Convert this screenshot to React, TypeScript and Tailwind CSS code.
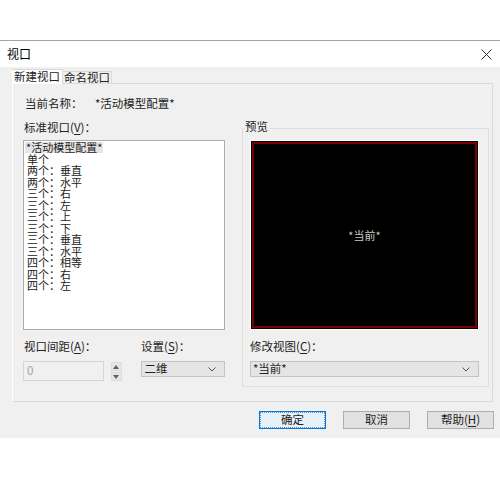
import { ReactNode } from "react";

const items = [
  "*活动模型配置*",
  "单个",
  "两个：垂直",
  "两个：水平",
  "三个：右",
  "三个：左",
  "三个：上",
  "三个：下",
  "三个：垂直",
  "三个：水平",
  "四个：相等",
  "四个：右",
  "四个：左",
];

function Mn({ children }: { children: ReactNode }) {
  return <span className="underline underline-offset-2">{children}</span>;
}

function Chevron() {
  return (
    <svg width="8" height="5" viewBox="0 0 8 5" className="shrink-0">
      <path d="M0.5 0.5 L4 4 L7.5 0.5" fill="none" stroke="#555" strokeWidth="1" />
    </svg>
  );
}

function Combo({ value, className }: { value: string; className: string }) {
  return (
    <div
      className={`h-[16px] flex items-center justify-between pl-[2px] pr-[8px] bg-[#e5e5e5] border border-[#c3c3c3] text-[#222] ${className}`}
    >
      <span>{value}</span>
      <Chevron />
    </div>
  );
}

function Button({ label, primary }: { label: ReactNode; primary?: boolean }) {
  return (
    <div
      className={`w-[67px] h-[18px] flex items-center justify-center border ${
        primary ? "border-[#0078d7] bg-[#e5f1fb]" : "border-[#adadad] bg-[#e1e1e1]"
      }`}
    >
      <div
        className={`w-full h-full flex items-center justify-center ${
          primary ? "border border-dotted border-[#6a8cb0]" : ""
        }`}
      >
        {label}
      </div>
    </div>
  );
}

export default function App() {
  return (
    <div
      className="w-[500px] h-[480px] bg-white flex flex-col text-[11.5px] text-[#222] leading-none"
      style={{ fontFamily: '"Noto Sans CJK SC", "Liberation Sans", sans-serif' }}
    >
      <div className="h-[40px] shrink-0" />

      {/* title bar */}
      <div className="h-[27px] shrink-0 border-t border-[#a6a6a6] flex items-center justify-between pl-[7px] pr-[8px]">
        <span className="text-[12px] text-black">视口</span>
        <svg width="11" height="11" viewBox="0 0 11 11">
          <path d="M0.5 0.5 L10.5 10.5 M10.5 0.5 L0.5 10.5" stroke="#333" strokeWidth="1" />
        </svg>
      </div>

      {/* dialog body */}
      <div className="h-[371px] shrink-0 bg-[#f0f0f0] flex flex-col">
        {/* tabs */}
        <div className="h-[16px] flex items-end pl-[12px]">
          <div className="relative z-10 -mb-px h-[15px] w-[51px] bg-white border-t border-r border-[#d9d9d9] flex items-center justify-center">
            新建视口
          </div>
          <div className="h-[12px] w-[49px] bg-[#f0f0f0] border-t border-r border-[#d9d9d9] flex items-center justify-center">
            命名视口
          </div>
        </div>

        {/* tab panel */}
        <div className="ml-[12px] w-[481px] h-[319px] border-l border-l-white border-t border-r border-b border-[#dadada] flex flex-col">
          <div className="mt-[12px] h-[16px] flex items-center pl-[12px]">
            <span className="w-[70px]">当前名称：</span>
            <span>*活动模型配置*</span>
          </div>

          <div className="mt-[8px] flex pl-[10px]">
            {/* left column */}
            <div className="w-[202px] flex flex-col">
              <div className="h-[16px] flex items-center pl-[1px]">
                标准视口(<Mn>V</Mn>)：
              </div>
              <div className="mt-[4px] h-[190px] bg-white border border-[#adadad] pt-[1px] pl-[1px] text-[11px]">
                {items.map((it, i) => (
                  <div key={it} className="h-[11.5px] flex items-center">
                    <span className={i === 0 ? "bg-[#e5e5e5] px-[1px]" : "px-[2px]"}>{it}</span>
                  </div>
                ))}
              </div>
              <div className="mt-[9px] h-[16px] flex items-center">
                <span className="w-[118px] pl-[1px]">
                  视口间距(<Mn>A</Mn>)：
                </span>
                <span>
                  设置(<Mn>S</Mn>)：
                </span>
              </div>
              <div className="mt-[6px] flex items-start">
                <div className="w-[81px] h-[20px] border border-[#d5d5d5] bg-[#f0f0f0] flex items-center pl-[3px] text-[#a0a0a0]">
                  0
                </div>
                <div className="ml-[7px] w-[12px] flex flex-col gap-[1px] pt-[1px]">
                  <div className="h-[9px] bg-[#e6e6e6] border border-[#dcdcdc] flex items-center justify-center">
                    <svg width="6" height="4" viewBox="0 0 6 4">
                      <path d="M3 0 L6 4 L0 4 Z" fill="#606060" />
                    </svg>
                  </div>
                  <div className="h-[9px] bg-[#e6e6e6] border border-[#dcdcdc] flex items-center justify-center">
                    <svg width="6" height="4" viewBox="0 0 6 4">
                      <path d="M0 0 L6 0 L3 4 Z" fill="#606060" />
                    </svg>
                  </div>
                </div>
                <Combo value="二维" className="ml-[19px] w-[84px]" />
              </div>
            </div>

            {/* preview group */}
            <div className="ml-[17px] mt-[8px] w-[247px] h-[259px] relative border border-[#dfdfdf] pt-[11px] pl-[7px] flex flex-col">
              <span className="absolute -top-[8px] left-[1px] bg-[#f0f0f0] px-[1px]">预览</span>
              <div className="w-[229px] h-[190px] border border-white bg-black p-px">
                <div className="w-full h-full border-2 border-[#7c0000] flex items-center justify-center text-[#c8c8c8] text-[11px]">
                  *当前*
                </div>
              </div>
              <div className="mt-[9px] h-[16px] flex items-center">
                修改视图(<Mn>C</Mn>)：
              </div>
              <Combo value="*当前*" className="mt-[6px] w-[229px]" />
            </div>
          </div>
        </div>

        {/* buttons */}
        <div className="mt-[9px] flex justify-end gap-[17px] pr-[6px]">
          <Button label="确定" primary />
          <Button label="取消" />
          <Button
            label={
              <span>
                帮助(<Mn>H</Mn>)
              </span>
            }
          />
        </div>
      </div>
    </div>
  );
}
